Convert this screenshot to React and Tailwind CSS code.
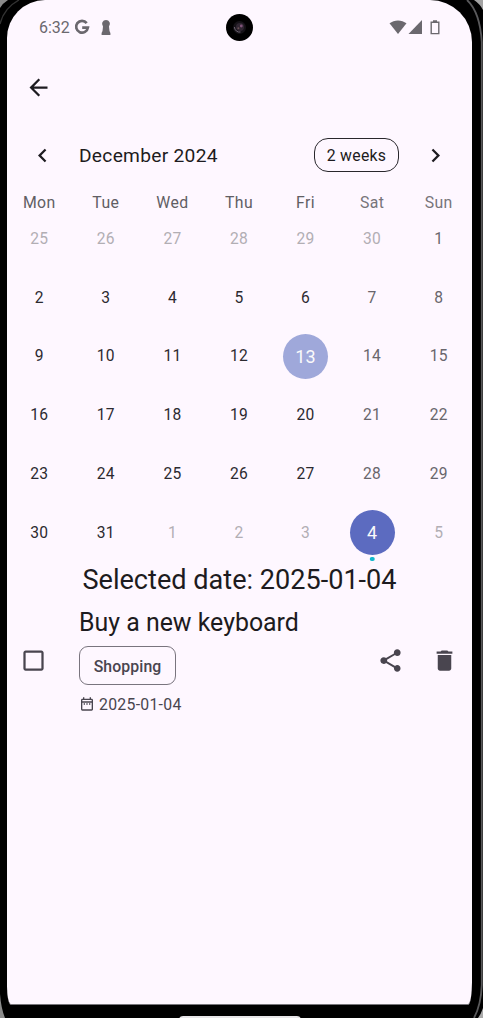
import React from "react";

const weekdays = ["Mon", "Tue", "Wed", "Thu", "Fri", "Sat", "Sun"];
const days = [
  25, 26, 27, 28, 29, 30, 1, 2, 3, 4, 5, 6, 7, 8, 9, 10, 11, 12, 13, 14, 15,
  16, 17, 18, 19, 20, 21, 22, 23, 24, 25, 26, 27, 28, 29, 30, 31, 1, 2, 3, 4, 5,
];

function Icon({ d, className }) {
  return (
    <svg viewBox="0 0 24 24" fill="currentColor" className={className}>
      <path d={d} />
    </svg>
  );
}

function StatusBar() {
  return (
    <div className="flex h-[54px] shrink-0 items-center pl-8 pr-[32px] text-[#6b686e]">
      <span className="w-[35px] pt-[2px] text-[16px] leading-none">6:32</span>
      <svg viewBox="0 0 16 16" fill="none" stroke="currentColor" strokeWidth="2.7" className="size-4">
        <path d="M12.7 4.1A5.9 5.9 0 1 0 13.9 8.6H8.2" />
      </svg>
      <svg viewBox="0 0 10 17" fill="currentColor" className="ml-[11px] h-[17px] w-[10px]">
        <path d="M5 1a4 4 0 0 0-3 6.6L1.5 12 .6 14v2h8.8v-2l-.9-2L8 7.6A4 4 0 0 0 5 1z" />
      </svg>
      <div className="ml-auto flex items-center">
        <svg viewBox="0 0 18 15" fill="currentColor" className="h-[15px] w-[18px]">
          <path d="M.5 3.3C5.3-.6 12.7-.6 17.5 3.3L9 13.9z" />
        </svg>
        <svg viewBox="0 0 14 15" fill="currentColor" className="ml-px h-[15px] w-[14px]">
          <path d="M14 0v14H.5z" />
        </svg>
        <svg viewBox="0 0 10 15" fill="none" stroke="currentColor" strokeWidth="1.4" className="ml-2 h-[15px] w-[10px]">
          <path d="M1.2 2.2h7.6v11.4H1.2zM3 1h4" />
        </svg>
      </div>
    </div>
  );
}

function Day({ value, index }) {
  const outside = index < 6 || index > 36;
  const weekend = index % 7 > 4;
  let tone = "text-[#2c2a30]";
  if (outside) tone = "text-[#b2aeb4]";
  else if (weekend) tone = "text-[#69666c]";
  let marker = "pt-[2px] text-[15.6px]";
  if (index === 18) {
    tone = "text-[#fafafa] text-[18px]";
    marker = "bg-[#9fa8da]";
  } else if (index === 40) {
    tone = "text-[#fafafa] text-[18px]";
    marker = "bg-[#5c6bc0]";
  }
  return (
    <div className={`relative flex items-center justify-center ${tone}`}>
      <span className={`flex size-[45px] items-center justify-center rounded-full tracking-[0.28px] ${marker}`}>
        {value}
      </span>
      {index === 40 && (
        <span className="absolute bottom-[0.5px] left-1/2 size-[4.5px] -translate-x-1/2 rounded-full bg-[#12b8cc]" />
      )}
    </div>
  );
}

function Bezel() {
  return (
    <svg viewBox="0 0 483 1018" fill="none" className="pointer-events-none absolute inset-0 h-[1018px] w-[483px]">
      <path d="M0 0H8Q3 3 0 8z" fill="#8b8b8b" />
      <path d="M19 0Q4 8 0 24" stroke="#333" strokeWidth="1.3" />
      <path d="M474 0h9v10Q480 4 474 0z" fill="#a3a3a3" />
      <path d="M467 0Q480 12 481.8 42V985Q481 1005 474 1018" stroke="#59595b" strokeWidth="1.8" />
      <path d="M483 1008v10h-5Q481 1014 483 1008z" fill="#aaa" />
      <path d="M0 994Q1 1008 5 1018H0z" fill="#8b8b8b" />
    </svg>
  );
}

export default function App() {
  return (
    <div className="relative h-[1018px] w-[483px] overflow-hidden bg-black font-['Roboto',sans-serif]">
      <div className="flex h-[1018px] flex-col overflow-hidden pl-[7px] pr-[11px]">
        <main className="flex h-[1005px] shrink-0 flex-col overflow-hidden rounded-tl-[38px] rounded-tr-[42px] border-b border-[#77757a] bg-[#fef7ff] text-[#1d1b20] [border-bottom-left-radius:4px_18px] [border-bottom-right-radius:4px_22px]">
          <StatusBar />
          <header className="flex h-[66px] shrink-0 items-center pl-[18px]">
            <Icon className="size-[27px]" d="M20 11H7.83l5.59-5.59L12 4l-8 8 8 8 1.41-1.41L7.83 13H20z" />
          </header>
          <div className="flex h-[70px] shrink-0 items-center">
            <Icon className="ml-[22px] size-[27px]" d="M15.41 7.41 14 6l-6 6 6 6 1.41-1.41L10.83 12z" />
            <span className="ml-[23px] pt-[2px] text-[19.2px] tracking-[0.28px]">December 2024</span>
            <button className="ml-auto flex h-[34px] w-[85px] items-center justify-center rounded-[14px] border border-[#29272c] pt-px text-[15.8px] tracking-[0.28px]">
              2 weeks
            </button>
            <Icon className="ml-[23px] mr-[23px] size-[27px]" d="M10 6 8.59 7.41 13.17 12l-4.58 4.59L10 18l6-6z" />
          </div>
          <div className="-ml-px grid h-[19px] shrink-0 grid-cols-7 items-start pt-[3px] text-center text-[15.8px] leading-[19px] tracking-[0.4px] text-[#615e64]">
            {weekdays.map((day, i) => (
              <span key={day} className={i > 4 ? "text-[#77747a]" : ""}>{day}</span>
            ))}
          </div>
          <div className="-ml-px grid h-[353px] shrink-0 grid-cols-7 grid-rows-6">
            {days.map((value, index) => (
              <Day key={index} value={value} index={index} />
            ))}
          </div>
          <h1 className="mt-[2px] h-[33px] shrink-0 text-center text-[27.1px] leading-[33px]">
            Selected date: 2025-01-04
          </h1>
          <section className="flex items-center pl-[13px] pt-2">
            <Icon
              className="size-[27px] text-[#49454f]"
              d="M19 5v14H5V5h14m0-2H5c-1.1 0-2 .9-2 2v14c0 1.1.9 2 2 2h14c1.1 0 2-.9 2-2V5c0-1.1-.9-2-2-2z"
            />
            <div className="ml-8 flex flex-col items-start">
              <h2 className="h-[36px] text-[24.9px] leading-[36px]">Buy a new keyboard</h2>
              <span className="mt-[5px] flex h-[39px] w-[97px] items-center justify-center rounded-[9px] border border-[#79747e] pt-[2px] text-[15.8px] font-medium tracking-[0.11px] text-[#49454f]">
                Shopping
              </span>
              <div className="mt-2 flex h-[22px] items-center text-[#49454f]">
                <Icon
                  className="size-4"
                  d="M7 11h2v2H7zm14-5v14c0 1.1-.9 2-2 2H5a2 2 0 0 1-2-2V6c0-1.1.9-2 2-2h1V2h2v2h8V2h2v2h1c1.1 0 2 .9 2 2zM5 8h14V6H5zm14 12V10H5v10zm-4-7h2v-2h-2zm-4 0h2v-2h-2z"
                />
                <span className="ml-1 pt-px text-[15.8px] tracking-[0.28px]">2025-01-04</span>
              </div>
            </div>
            <div className="ml-auto mr-[14px] flex gap-[27px] text-[#49454f]">
              <Icon
                className="size-[27px]"
                d="M18 16.08c-.76 0-1.44.3-1.96.77L8.91 12.7c.05-.23.09-.46.09-.7s-.04-.47-.09-.7l7.05-4.11c.54.5 1.25.81 2.04.81 1.66 0 3-1.34 3-3s-1.34-3-3-3-3 1.34-3 3c0 .24.04.47.09.7L8.04 9.81C7.5 9.31 6.79 9 6 9c-1.66 0-3 1.34-3 3s1.34 3 3 3c.79 0 1.5-.31 2.04-.81l7.12 4.16c-.05.21-.08.43-.08.65 0 1.61 1.31 2.92 2.92 2.92s2.92-1.31 2.92-2.92-1.31-2.92-2.92-2.92z"
              />
              <Icon
                className="size-[27px]"
                d="M6 19c0 1.1.9 2 2 2h8c1.1 0 2-.9 2-2V7H6v12zM19 4h-3.5l-1-1h-5l-1 1H5v2h14V4z"
              />
            </div>
          </section>
        </main>
        <div className="mt-[11px] h-2 w-[122px] shrink-0 self-center rounded-t-sm bg-[#e7e5e8]" />
      </div>
      <Bezel />
      <div className="absolute left-[226px] top-[14px] flex size-[27px] items-center justify-center rounded-full bg-black">
        <svg viewBox="0 0 15 15" className="size-[15px]">
          <circle cx="7.5" cy="7.5" r="6.5" fill="#151217" />
          <circle cx="8" cy="7" r="4" fill="#302632" />
          <path d="M2.5 7a5 5 0 0 0 6 5" fill="none" stroke="#706775" />
          <circle cx="9.3" cy="6" r="1.4" fill="#80547a" />
          <circle cx="6.4" cy="8.3" r="1" fill="#695053" />
        </svg>
      </div>
    </div>
  );
}
